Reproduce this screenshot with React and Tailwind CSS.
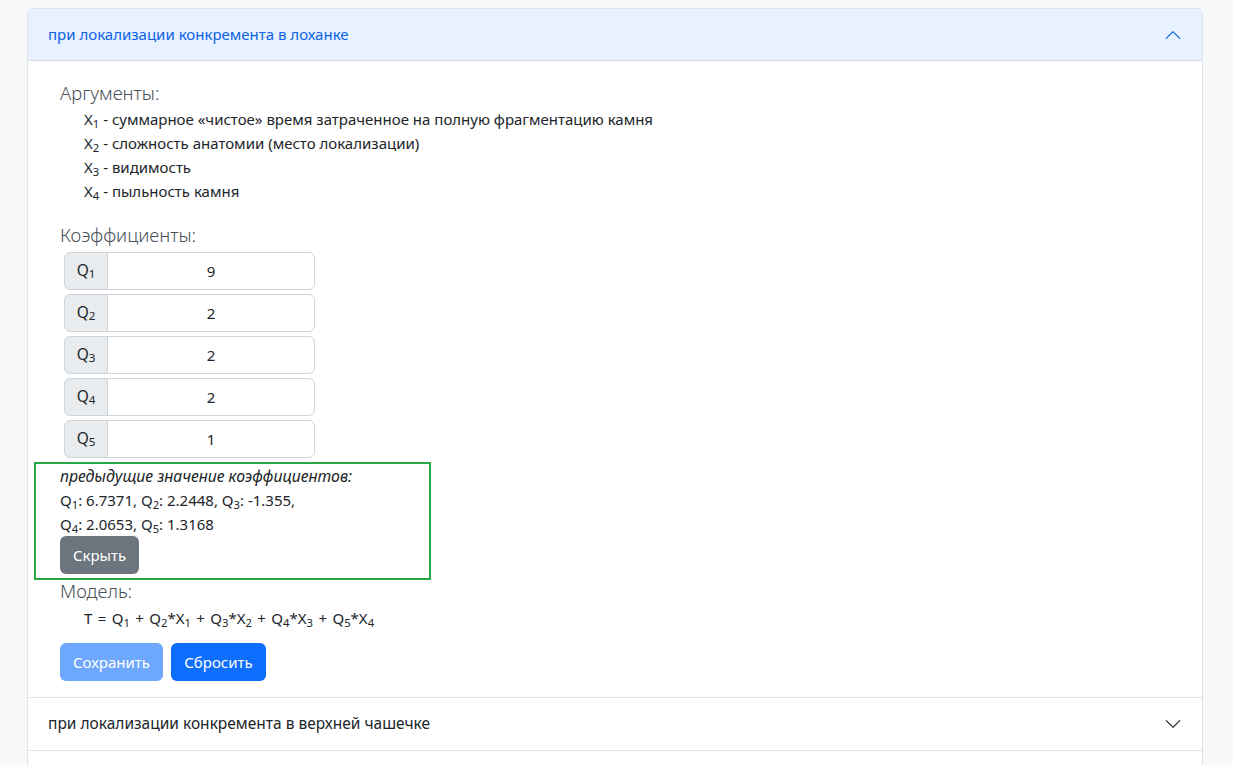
const Chevron = ({ className }) => (
  <svg viewBox="0 0 16 16" className={className} fill="currentColor">
    <path
      fillRule="evenodd"
      d="M1.646 4.646a.5.5 0 0 1 .708 0L8 10.293l5.646-5.647a.5.5 0 0 1 .708.708l-6 6a.5.5 0 0 1-.708 0l-6-6a.5.5 0 0 1 0-.708z"
    />
  </svg>
);

const args = [
  'суммарное «чистое» время затраченное на полную фрагментацию камня',
  'сложность анатомии (место локализации)',
  'видимость',
  'пыльность камня',
];

const coeffs = ['9', '2', '2', '2', '1'];

export default function App() {
  return (
    <div
      className="h-screen overflow-hidden bg-[#f8f9fa] pl-[27px] pt-[8px] text-[#212529]"
      style={{ fontFamily: '"Noto Sans", "Open Sans", sans-serif' }}
    >
      <div className="w-[1176px] rounded-t-[6px] border border-[#dee2e6] bg-white">
        {/* expanded item */}
        <button className="flex h-[52px] w-full items-center justify-between rounded-t-[5px] border-b border-[#d3dcea] bg-[#e7f1ff] px-5 text-left text-[15px] text-[#0c63e4]">
          <span>при локализации конкремента в лоханке</span>
          <Chevron className="h-[18px] w-[18px] rotate-180" />
        </button>

        <div className="px-5 pb-4 pt-[20px]">
          <div className="pl-3">
            <div className="mb-[2px] text-[18.5px] font-light leading-[24px] text-[#495057]">Аргументы:</div>
            <ul className="pl-6 text-[15px] leading-[24px]">
              {args.map((a, i) => (
                <li key={i}>
                  X<sub>{i + 1}</sub> - {a}
                </li>
              ))}
            </ul>

            <div className="mb-[5px] mt-[20px] text-[18.5px] font-light leading-[24px] text-[#495057]">Коэффициенты:</div>
            <div className="ml-1 flex w-[251px] flex-col gap-1">
              {coeffs.map((v, i) => (
                <div key={i} className="flex h-[38px] text-[15px]">
                  <span className="flex w-[44px] items-center justify-center rounded-l-[6px] border border-[#ced4da] bg-[#e9ecef] text-[15.5px]">
                    Q<sub>{i + 1}</sub>
                  </span>
                  <input
                    readOnly
                    value={v}
                    className="-ml-px min-w-0 flex-1 rounded-r-[6px] border border-[#ced4da] bg-white text-center outline-none"
                  />
                </div>
              ))}
            </div>

            <div className="-ml-[26px] mt-[4px] w-[397px] border-2 border-[#28a745] pb-[4px] pl-[24px] text-[15px] leading-[24px]">
              <div className="text-[15.8px] italic">предыдущие значение коэффициентов:</div>
              <div>
                Q<sub>1</sub>: 6.7371, Q<sub>2</sub>: 2.2448, Q<sub>3</sub>: -1.355,
              </div>
              <div>
                Q<sub>4</sub>: 2.0653, Q<sub>5</sub>: 1.3168
              </div>
              <button className="h-[38px] w-[79px] rounded-[6px] bg-[#6c757d] text-[15px] text-white">Скрыть</button>
            </div>

            <div className="text-[18.5px] font-light leading-[22px] text-[#495057]">Модель:</div>
            <div className="mt-[4px] pl-6 text-[15px] leading-[24px] [word-spacing:1.5px]">
              T = Q<sub>1</sub> + Q<sub>2</sub>*X<sub>1</sub> + Q<sub>3</sub>*X<sub>2</sub> + Q<sub>4</sub>*X<sub>3</sub> + Q<sub>5</sub>*X<sub>4</sub>
            </div>

            <div className="mt-[13px] flex gap-2">
              <button className="h-[38px] w-[103px] rounded-[6px] bg-[#6ea8fe] text-[15px] text-white">Сохранить</button>
              <button className="h-[38px] w-[95px] rounded-[6px] bg-[#0d6efd] text-[15px] text-white">Сбросить</button>
            </div>
          </div>
        </div>

        {/* collapsed item */}
        <button className="flex h-[53px] w-full items-center justify-between border-t border-[#dee2e6] bg-white px-5 text-left text-[15.5px] text-[#212529]">
          <span>при локализации конкремента в верхней чашечке</span>
          <Chevron className="h-[18px] w-[18px]" />
        </button>
        <div className="h-[53px] border-t border-[#dee2e6] bg-white" />
      </div>
    </div>
  );
}
